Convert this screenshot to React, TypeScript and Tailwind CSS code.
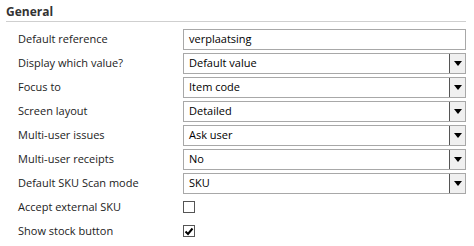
const rows: { label: string; kind: 'text' | 'select' | 'check'; value?: string; checked?: boolean }[] = [
  { label: 'Default reference', kind: 'text', value: 'verplaatsing' },
  { label: 'Display which value?', kind: 'select', value: 'Default value' },
  { label: 'Focus to', kind: 'select', value: 'Item code' },
  { label: 'Screen layout', kind: 'select', value: 'Detailed' },
  { label: 'Multi-user issues', kind: 'select', value: 'Ask user' },
  { label: 'Multi-user receipts', kind: 'select', value: 'No' },
  { label: 'Default SKU Scan mode', kind: 'select', value: 'SKU' },
  { label: 'Accept external SKU', kind: 'check', checked: false },
  { label: 'Show stock button', kind: 'check', checked: true },
];

function Arrow() {
  return (
    <div className="w-[16px] h-full border-l border-[#555] bg-[#f0f0f0] flex items-center justify-center">
      <svg width="8" height="5" viewBox="0 0 8 5">
        <path d="M0 0 H8 L4 5 Z" fill="#000" />
      </svg>
    </div>
  );
}

export default function App() {
  return (
    <div className="w-[474px] h-[246px] bg-white pl-[6px] pr-[8px] pt-[4px] text-[#222]" style={{ fontFamily: '"Open Sans", sans-serif' }}>
      <div className="h-[18px] border-b border-[#cfcfcf] text-[12px] font-bold leading-[15px] text-[#333]">General</div>

      <div className="mt-[5px] flex flex-col">
        {rows.map((r) => (
          <div key={r.label} className="h-[24px] flex items-center">
            <div className="w-[177px] pl-[12px] text-[11px] leading-[14px] whitespace-nowrap">{r.label}</div>
            {r.kind === 'check' ? (
              <div className="w-[12px] h-[12px] border border-[#555] bg-white flex items-center justify-center">
                {r.checked && (
                  <svg width="10" height="9" viewBox="0 0 10 9">
                    <path d="M1.5 4.5 L4 7 L8.5 1.5" stroke="#000" strokeWidth="2" fill="none" />
                  </svg>
                )}
              </div>
            ) : (
              <div className="flex-1 h-[21px] border border-[#a8a8a8] bg-white flex items-center">
                <div className="flex-1 pl-[5px] text-[11px] leading-[14px] text-black">{r.value}</div>
                {r.kind === 'select' && <Arrow />}
              </div>
            )}
          </div>
        ))}
      </div>
    </div>
  );
}
